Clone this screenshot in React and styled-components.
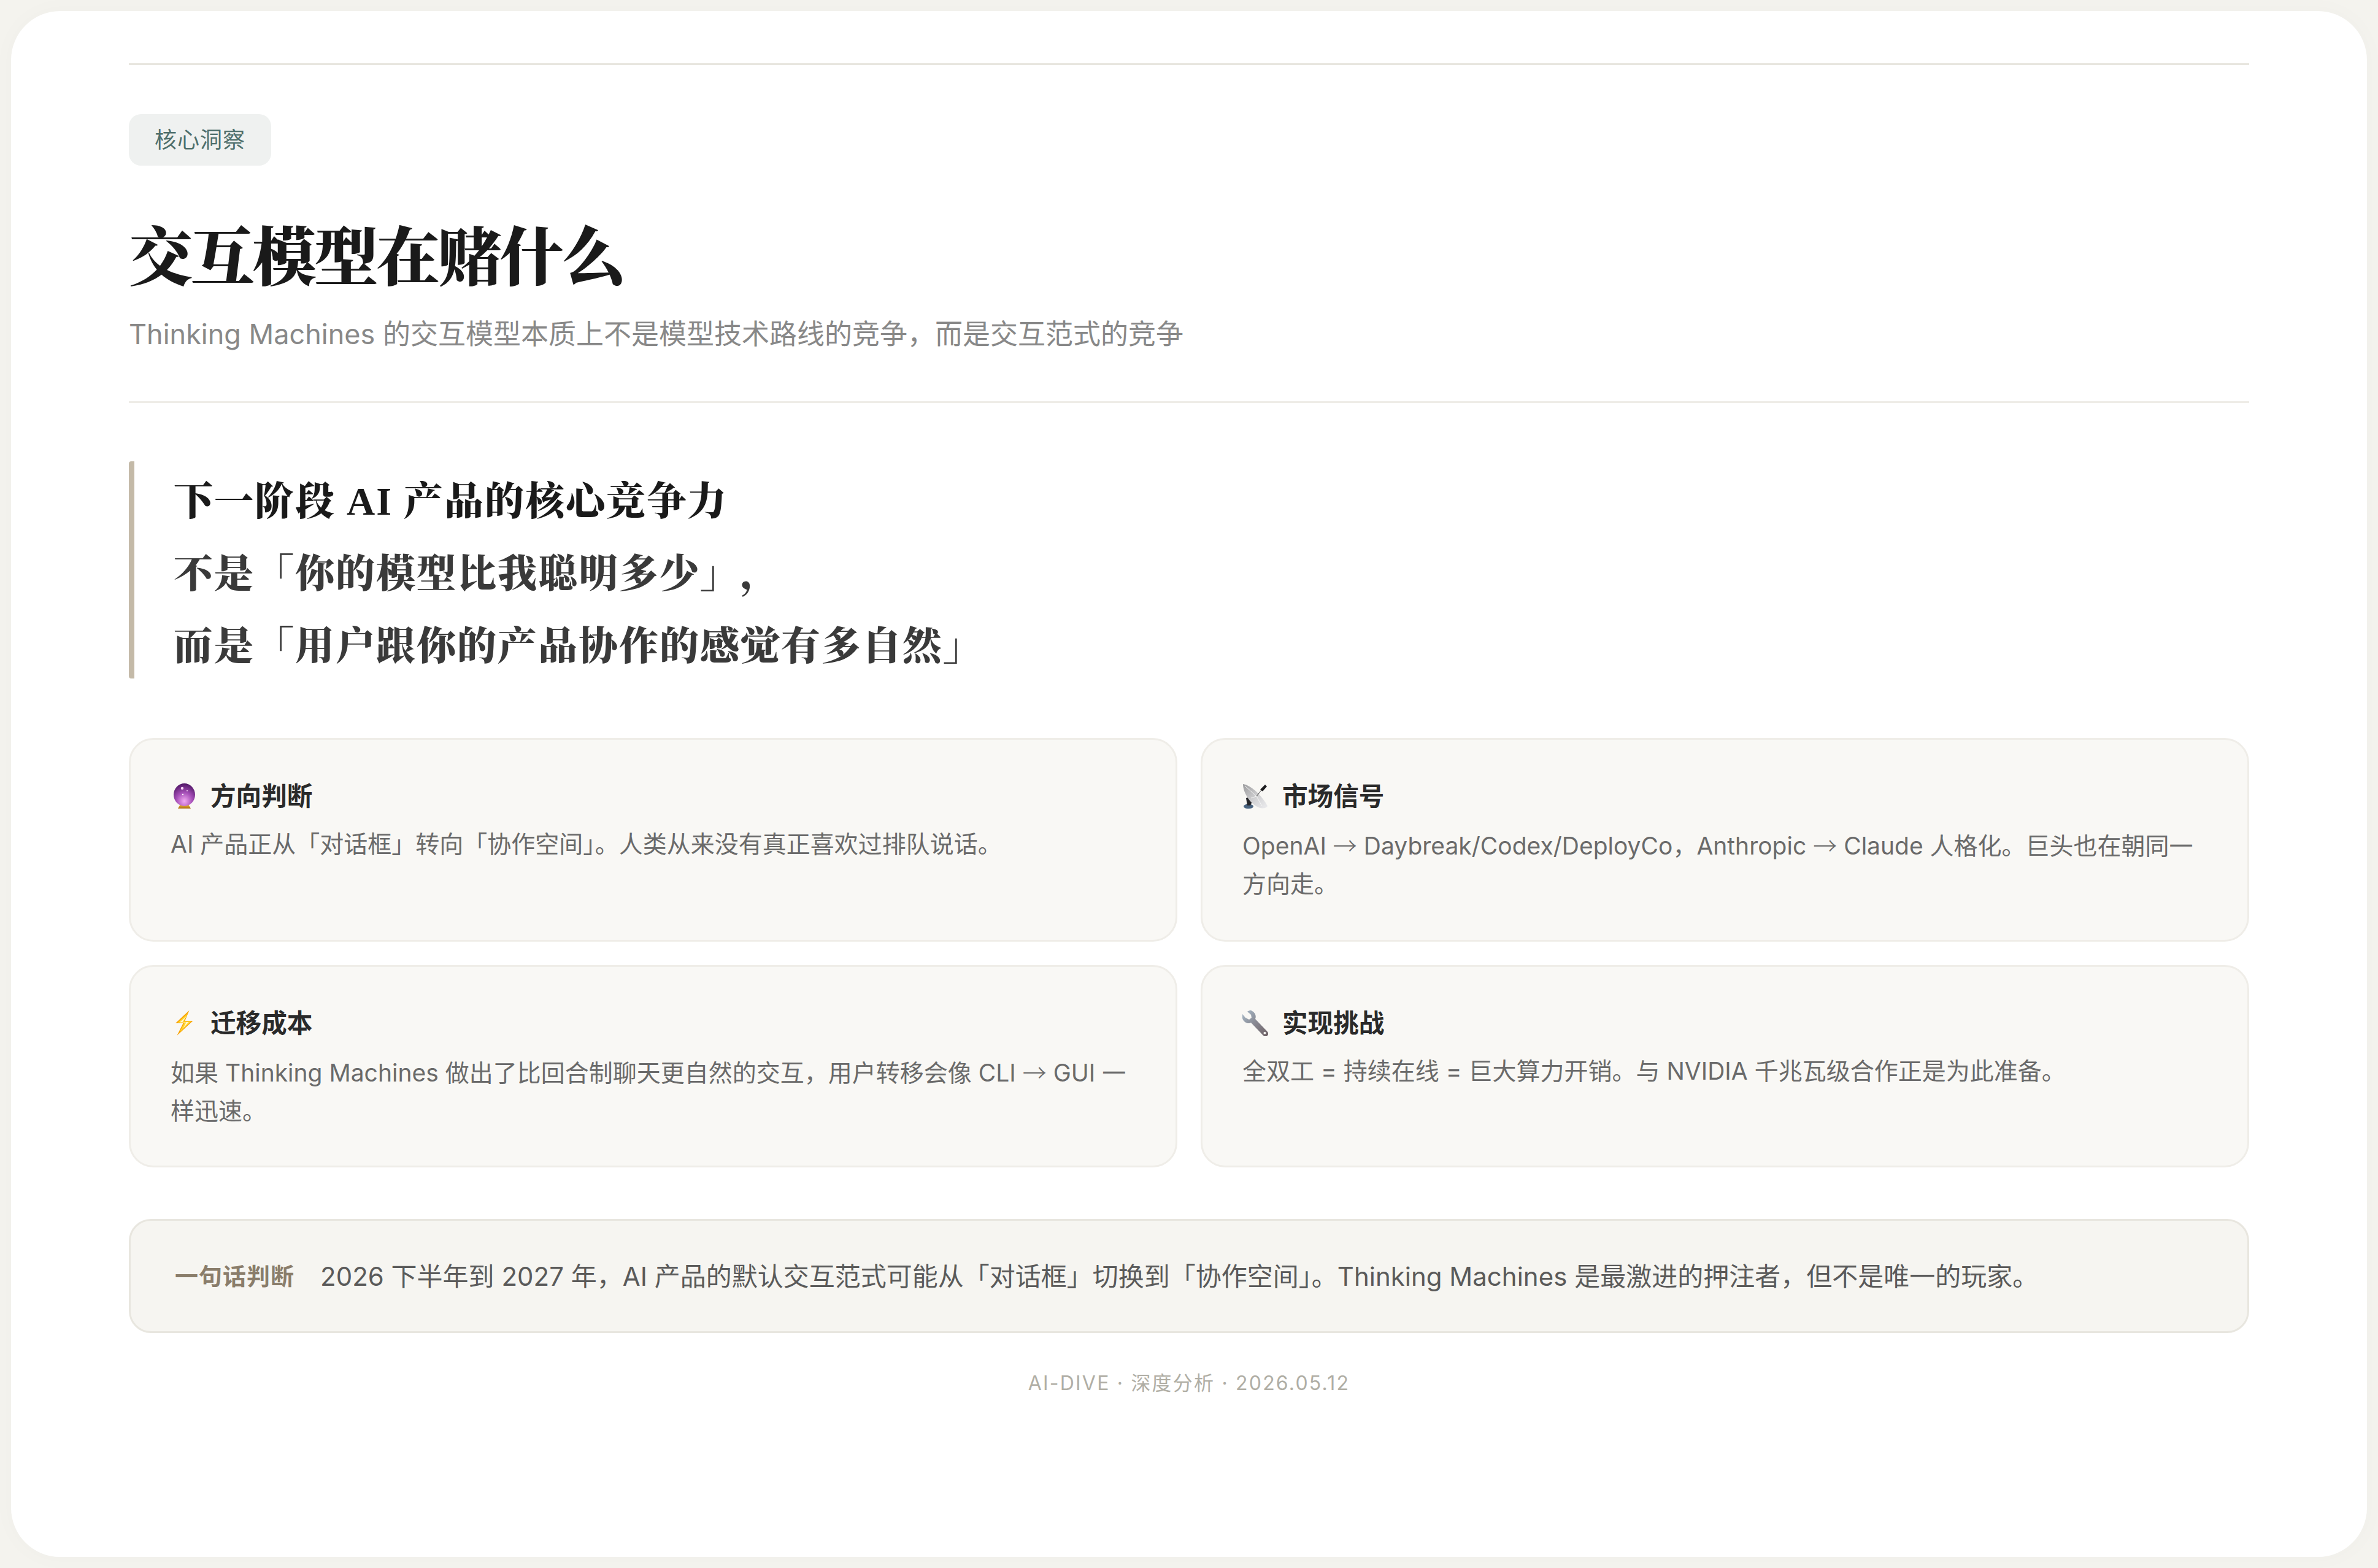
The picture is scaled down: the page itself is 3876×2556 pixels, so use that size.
import React from "react";
import styled, { createGlobalStyle } from "styled-components";

const SANS = `Inter, "Noto Sans CJK SC", sans-serif`;
const SERIF = `"Liberation Serif", "Noto Serif CJK SC", "Noto Sans CJK SC", serif`;

const Global = createGlobalStyle`
  html, body { margin: 0; padding: 0; background: #f4f3ee; }
  * { box-sizing: border-box; }
`;

const Page = styled.div`
  width: 3876px;
  height: 2556px;
  padding: 18px;
  background: #f4f3ee;
  font-family: ${SANS};
`;

const Sheet = styled.main`
  height: 100%;
  background: #ffffff;
  border-radius: 80px;
  box-shadow: 0 0 40px rgba(60, 50, 30, 0.025);
  padding: 85px 192px 0;
  display: flex;
  flex-direction: column;
`;

const Rule = styled.hr`
  width: 100%;
  margin: ${(p) => p.$gap || 0}px 0 0;
  border: 0;
  height: 3px;
  flex: none;
  background: ${(p) => p.$color};
`;

const Tag = styled.span`
  align-self: flex-start;
  height: 84px;
  margin-top: 80px;
  padding: 0 42px 7px;
  display: inline-flex;
  align-items: center;
  border-radius: 20px;
  background: #eff1f0;
  color: #4f6f6c;
  font-size: 36px;
  letter-spacing: 1px;
`;

const Title = styled.h1`
  margin: 92px 0 0;
  height: 120px;
  font-family: ${SERIF};
  font-size: 104px;
  line-height: 120px;
  font-weight: 900;
  letter-spacing: -3.2px;
  color: #1a1a1a;
`;

const Subtitle = styled.p`
  margin: 31px 0 0;
  height: 64px;
  font-size: 45px;
  line-height: 64px;
  color: #888888;
`;

const Quote = styled.blockquote`
  margin: 95px 0 0;
  height: 354px;
  padding: 7px 0 0 64px;
  border-left: 9px solid #c4baa8;
  border-radius: 4px;
  font-family: ${SERIF};
  font-size: 64px;
  line-height: 118px;
  font-weight: 900;
  letter-spacing: 2px;
  text-spacing-trim: space-all;
  color: #3a3a3a;
`;

const QuoteLead = styled.span`
  color: #1a1a1a;
`;

const CardGrid = styled.section`
  margin-top: 97px;
  display: grid;
  grid-template-columns: 1fr 1fr;
  grid-template-rows: 332px 330px;
  gap: 38px;
`;

const Card = styled.article`
  padding: 66px 65px 0;
  border: 3px solid #efede8;
  border-radius: 40px;
  background: #f9f8f5;
`;

const CardHead = styled.h3`
  margin: 0 0 21px;
  height: 52px;
  display: flex;
  align-items: center;
  font-size: 41.6px;
  line-height: 52px;
  font-weight: 700;
  color: #2a2a2a;
`;

const EmojiSlot = styled.span`
  width: 65px;
  flex: none;
  display: flex;
  align-items: center;
`;

const CardBody = styled.p`
  margin: 0;
  font-size: 39px;
  line-height: 62px;
  color: #6a6a6a;
`;

const Verdict = styled.aside`
  margin-top: 84px;
  height: 186px;
  flex: none;
  padding: 0 72px 6px;
  display: flex;
  align-items: center;
  border: 3px solid #e8e6df;
  border-radius: 36px;
  background: #f6f5f1;
  font-size: 42px;
  color: #5a5a5a;
`;

const VerdictLabel = styled.strong`
  margin-right: 42px;
  font-size: 38px;
  font-weight: 700;
  letter-spacing: 1px;
  color: #8a7d6b;
`;

const Footer = styled.footer`
  margin-top: 58px;
  text-align: center;
  font-size: 32px;
  line-height: 48px;
  letter-spacing: 2.2px;
  color: #b0aea5;
`;

const Arrow = styled.span`
  font-family: "Noto Sans CJK SC", sans-serif;
  font-weight: 300;
`;

const CrystalBall = () => (
  <svg width="42" height="42" viewBox="-5 0 42 42">
    <defs>
      <radialGradient id="ball" cx="50%" cy="78%" r="75%">
        <stop offset="0" stopColor="#f2a9f2" />
        <stop offset="0.5" stopColor="#a64fb8" />
        <stop offset="1" stopColor="#55196a" />
      </radialGradient>
      <linearGradient id="foot" x1="0" x2="0" y1="0" y2="1">
        <stop offset="0" stopColor="#f5c542" />
        <stop offset="1" stopColor="#a86a10" />
      </linearGradient>
    </defs>
    <path d="M11 34h13l4 7H7z" fill="url(#foot)" />
    <ellipse cx="17.5" cy="18.5" rx="17.5" ry="18.5" fill="url(#ball)" />
    <circle cx="14" cy="8" r="2.2" fill="#f7d6f5" />
    <circle cx="15" cy="18" r="1.2" fill="#fff" />
    <circle cx="22" cy="12" r="1" fill="#f7d6f5" />
  </svg>
);

const Antenna = () => (
  <svg width="42" height="42" viewBox="0 0 42 42">
    <defs>
      <linearGradient id="dish" x1="0" x2="1" y1="0" y2="1">
        <stop offset="0" stopColor="#9a9a9c" />
        <stop offset="0.55" stopColor="#d2d2d4" />
        <stop offset="1" stopColor="#ececee" />
      </linearGradient>
    </defs>
    <ellipse cx="10" cy="37.5" rx="8" ry="3.8" fill="#4a6480" />
    <path d="M6 24l6-2 4 8-3 6H8z" fill="#26262a" />
    <path d="M1 1C13 3 30 17 41 37c-2 4-9 5-17 1C11 31 1 14 1 1z" fill="url(#dish)" />
    <path d="M4 4L23 21 M23 21L14 24 M23 21L32 37" stroke="#f4f4f4" strokeWidth="1" fill="none" />
    <path d="M23 21L31 11" stroke="#666" strokeWidth="1.2" />
    <path d="M29 10l8-8 3 3-7 8z" fill="#1d1d1f" />
  </svg>
);

const Bolt = () => (
  <svg width="42" height="42" viewBox="-8 0 42 42">
    <path d="M22.5 0L0 21h12.5L2.5 41 28.5 17H15.5z" fill="#f8a100" />
    <path d="M20.5 4.5L3.5 20h11L6.5 36 25.5 18h-12z" fill="#ffd42a" />
    <path d="M18 9.5L7 19.5h10.5l-5 9.5 9-10h-10z" fill="#fff6cf" />
  </svg>
);

const Wrench = () => (
  <svg width="42" height="42" viewBox="0 0 42 42">
    <defs>
      <linearGradient id="steel" x1="0" x2="1" y1="0" y2="1">
        <stop offset="0" stopColor="#a9bccb" />
        <stop offset="0.45" stopColor="#8a8c96" />
        <stop offset="1" stopColor="#6d5f63" />
      </linearGradient>
    </defs>
    <path
      d="M14 0c-3 0-5 1-6 2l6 5 1 5-4 3-6-3-5-6c-1 5 0 9 3 12 3 3 8 4 11 2l20 21c2 2 5 2 7 0 2-2 1-5 0-6L21 14c2-5 0-11-7-14z"
      fill="url(#steel)"
    />
    <circle cx="36.5" cy="37" r="2" fill="#f9f8f5" />
  </svg>
);

const cards = [
  {
    icon: <CrystalBall />,
    title: "方向判断",
    body: <>AI 产品正从「对话框」转向「协作空间」。人类从来没有真正喜欢过排队说话。</>,
  },
  {
    icon: <Antenna />,
    title: "市场信号",
    body: (
      <>
        OpenAI <Arrow>→</Arrow> Daybreak/Codex/DeployCo，Anthropic <Arrow>→</Arrow> Claude 人格化。巨头也在朝同一方向走。
      </>
    ),
  },
  {
    icon: <Bolt />,
    title: "迁移成本",
    body: (
      <>
        如果 Thinking Machines 做出了比回合制聊天更自然的交互，用户转移会像 CLI <Arrow>→</Arrow> GUI 一样迅速。
      </>
    ),
  },
  {
    icon: <Wrench />,
    title: "实现挑战",
    body: <>全双工 = 持续在线 = 巨大算力开销。与 NVIDIA 千兆瓦级合作正是为此准备。</>,
  },
];

export default function App() {
  return (
    <Page>
      <Global />
      <Sheet>
        <Rule $color="#e8e6df" />
        <Tag>核心洞察</Tag>
        <Title>交互模型在赌什么</Title>
        <Subtitle>Thinking Machines 的交互模型本质上不是模型技术路线的竞争，而是交互范式的竞争</Subtitle>
        <Rule $color="#eeece7" $gap={77} />
        <Quote>
          <QuoteLead>下一阶段 AI 产品的核心竞争力</QuoteLead>
          <br />
          不是「你的模型比我聪明多少」，
          <br />
          而是「用户跟你的产品协作的感觉有多自然」
        </Quote>
        <CardGrid>
          {cards.map((c) => (
            <Card key={c.title}>
              <CardHead>
                <EmojiSlot>{c.icon}</EmojiSlot>
                {c.title}
              </CardHead>
              <CardBody>{c.body}</CardBody>
            </Card>
          ))}
        </CardGrid>
        <Verdict>
          <VerdictLabel>一句话判断</VerdictLabel>
          2026 下半年到 2027 年，AI 产品的默认交互范式可能从「对话框」切换到「协作空间」。Thinking Machines 是最激进的押注者，但不是唯一的玩家。
        </Verdict>
        <Footer>AI-DIVE · 深度分析 · 2026.05.12</Footer>
      </Sheet>
    </Page>
  );
}
